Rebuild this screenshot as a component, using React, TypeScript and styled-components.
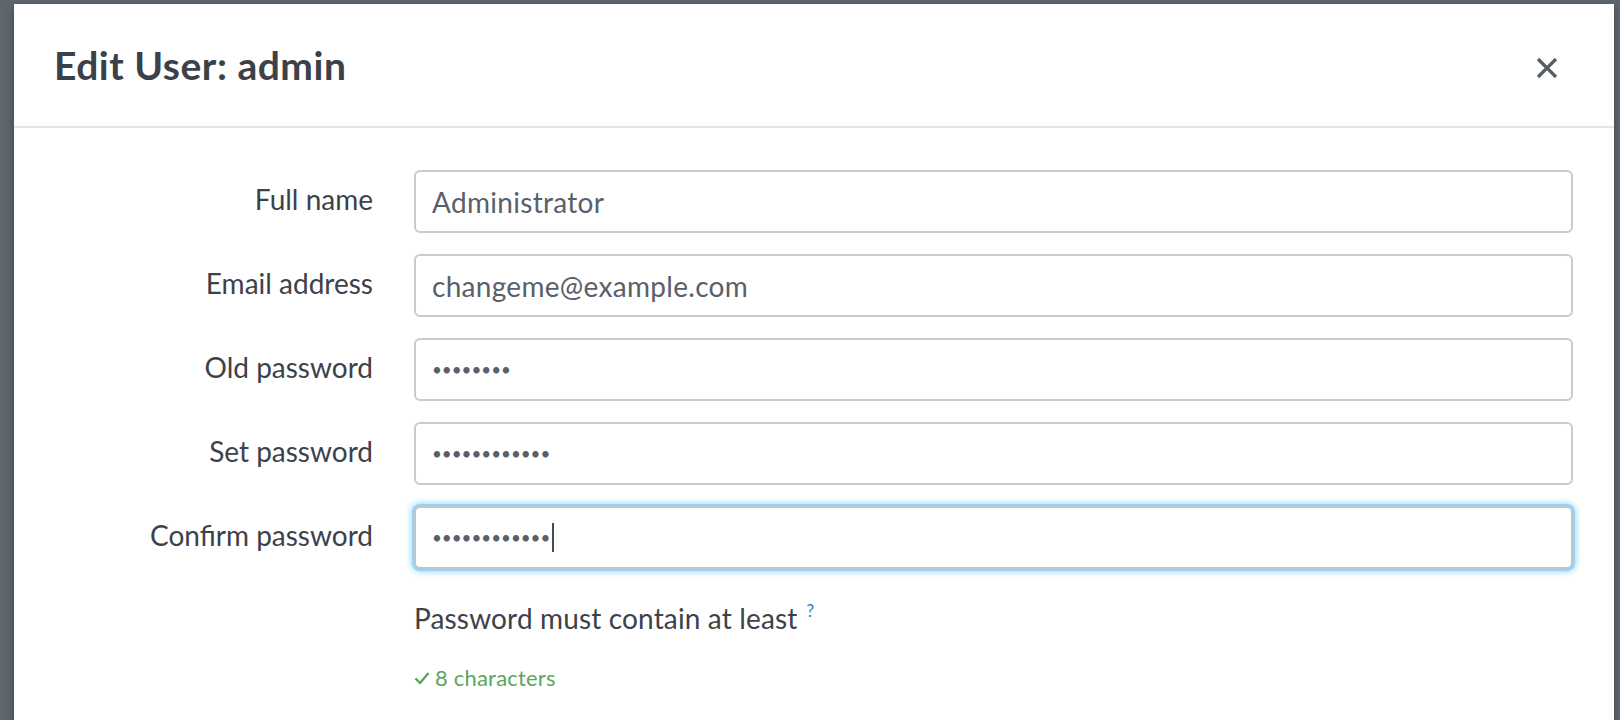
import React from "react";
import styled, { createGlobalStyle } from "styled-components";

const GlobalStyle = createGlobalStyle`
  html, body {
    margin: 0;
    padding: 0;
    background: #5f666e;
    overflow: hidden;
  }
  body {
    font-family: Lato, "Open Sans", sans-serif;
  }
  * { box-sizing: border-box; }
`;

const Backdrop = styled.div`
  width: 1620px;
  height: 720px;
  overflow: hidden;
  background: #5f666e;
  padding: 4px 6px 0 14px;
`;

const Modal = styled.div`
  width: 1600px;
  min-height: 760px;
  background: #ffffff;
  box-shadow: 0 3px 9px rgba(0, 0, 0, 0.35);
`;

const Header = styled.div`
  height: 124px;
  display: flex;
  align-items: center;
  justify-content: space-between;
  padding: 0 56px 0 40px;
  border-bottom: 2px solid #e1e6ea;
`;

const Title = styled.h2`
  margin: 0;
  font-family: Lato, sans-serif;
  font-weight: 700;
  font-size: 39px;
  color: #3b4149;
  letter-spacing: 0.5px;
`;

const CloseButton = styled.button`
  border: 0;
  background: transparent;
  padding: 0;
  margin-top: 6px;
  width: 22px;
  height: 22px;
  display: flex;
  align-items: center;
  justify-content: center;
  cursor: pointer;
`;

const Body = styled.div`
  padding: 42px 41px 0 0;
`;

const Form = styled.div`
  display: grid;
  grid-template-columns: 359px 1fr;
  column-gap: 41px;
  row-gap: 21px;
  align-items: center;
`;

const Label = styled.label`
  text-align: right;
  font-size: 28px;
  letter-spacing: 0;
  color: #3c424a;
  line-height: 1;
  padding-bottom: 6px;
`;

const FieldBox = styled.div`
  position: relative;
`;

const Input = styled.input<{ $focused?: boolean; $secret?: boolean }>`
  display: block;
  height: 63px;
  width: 100%;
  border: 2px solid #c6ccd3;
  border-radius: 6px;
  padding: 0 16px;
  font-family: Lato, sans-serif;
  font-size: ${(p) => (p.$secret ? "17px" : "28px")};
  letter-spacing: ${(p) => (p.$secret ? "0" : "0.3px")};
  color: #59606a;
  background: #fff;
  outline: none;
  caret-color: transparent;
  box-shadow: ${(p) =>
    p.$focused ? "0 0 0 2px #93d3fc, 0 0 6px 3px #9ed8fd" : "none"};
  border-color: ${(p) => (p.$focused ? "#bfc5cb" : "#c6ccd3")};
`;

const Caret = styled.span<{ $left: number }>`
  position: absolute;
  top: 17px;
  left: ${(p) => p.$left}px;
  width: 2px;
  height: 29px;
  background: #454b53;
`;

const Spacer = styled.div``;

const HelpBlock = styled.div`
  padding-top: 9px;
`;

const HelpText = styled.div`
  font-size: 28px;
  letter-spacing: 0.15px;
  color: #3c424a;
  line-height: 1.4;
`;

const HelpMark = styled.sup`
  color: #1e7bb8;
  font-size: 17px;
  margin-left: 9px;
  vertical-align: 12px;
`;

const Requirement = styled.div`
  margin-top: 26px;
  display: flex;
  align-items: center;
  gap: 5px;
  font-size: 22px;
  letter-spacing: 0.2px;
  color: #5aa65a;
`;

const fields = [
  { label: "Full name", type: "text", value: "Administrator" },
  { label: "Email address", type: "text", value: "changeme@example.com" },
  { label: "Old password", type: "password", value: "oldpassw" },
  { label: "Set password", type: "password", value: "newpassword1" },
  { label: "Confirm password", type: "password", value: "newpassword1", focused: true },
];

export default function App() {
  return (
    <>
      <GlobalStyle />
      <Backdrop>
        <Modal>
          <Header>
            <Title>Edit User: admin</Title>
            <CloseButton aria-label="Close">
              <svg width="22" height="22" viewBox="0 0 22 22">
                <path d="M2 2 L20 20 M20 2 L2 20" stroke="#555d66" strokeWidth="3.2" strokeLinecap="butt" />
              </svg>
            </CloseButton>
          </Header>
          <Body>
            <Form>
              {fields.map((f) => (
                <React.Fragment key={f.label}>
                  <Label>{f.label}</Label>
                  <FieldBox>
                    <Input
                      type={f.type}
                      defaultValue={f.value}
                      $focused={f.focused}
                      $secret={f.type === "password"}
                      autoFocus={f.focused}
                    />
                    {f.focused && <Caret $left={138} />}
                  </FieldBox>
                </React.Fragment>
              ))}
              <Spacer />
              <HelpBlock>
                <HelpText>
                  Password must contain at least<HelpMark>?</HelpMark>
                </HelpText>
                <Requirement>
                  <svg width="16" height="14" viewBox="0 0 16 14">
                    <path d="M1.5 7.5 L6 12 L14.5 2" fill="none" stroke="#5aa65a" strokeWidth="2.4" />
                  </svg>
                  8 characters
                </Requirement>
              </HelpBlock>
            </Form>
          </Body>
        </Modal>
      </Backdrop>
    </>
  );
}
